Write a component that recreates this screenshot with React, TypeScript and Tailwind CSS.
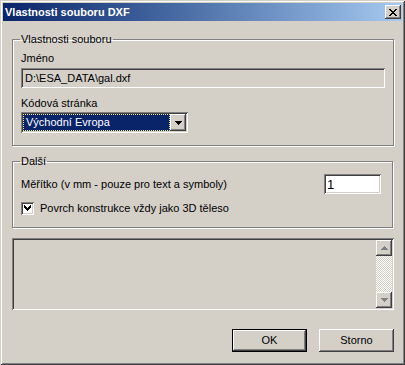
const raised =
  "shadow-[inset_-1px_-1px_#404040,inset_1px_1px_#ffffff,inset_-2px_-2px_#808080,inset_2px_2px_#d4d0c8]";
const sunken =
  "shadow-[inset_1px_1px_#808080,inset_-1px_-1px_#ffffff,inset_2px_2px_#404040,inset_-2px_-2px_#d4d0c8]";

function Arrow({ dir, color = "#000000" }: { dir: "up" | "down"; color?: string }) {
  return (
    <svg width="7" height="4" viewBox="0 0 7 4" shapeRendering="crispEdges">
      {dir === "down" ? (
        <path d="M0 0h7v1H0zM1 1h5v1H1zM2 2h3v1H2zM3 3h1v1H3z" fill={color} />
      ) : (
        <path d="M3 0h1v1H3zM2 1h3v1H2zM1 2h5v1H1zM0 3h7v1H0z" fill={color} />
      )}
    </svg>
  );
}

function Group({ title, children, className = "" }: { title: string; children: React.ReactNode; className?: string }) {
  return (
    <fieldset
      className={`ml-[9px] w-[381px] border border-[#808080] shadow-[inset_1px_1px_#ffffff,1px_1px_#ffffff] px-[8px] ${className}`}
    >
      <legend className="ml-[-1px] px-[1px] leading-[13px]">{title}</legend>
      {children}
    </fieldset>
  );
}

export default function App() {
  return (
    <div
      className="w-[405px] h-[365px] bg-[#d4d0c8] p-[3px] flex flex-col text-[11px] leading-[13px] text-black font-['Liberation_Sans',Arial,sans-serif] shadow-[inset_1px_1px_#d4d0c8,inset_-1px_-1px_#404040,inset_2px_2px_#ffffff,inset_-2px_-2px_#808080]"
    >
      {/* title bar */}
      <div className="h-[18px] flex items-center justify-between pl-[2px] pr-[1px] bg-linear-to-r from-[#0a246a] to-[#a6caf0]">
        <span className="font-bold text-white">Vlastnosti souboru DXF</span>
        <div className={`w-[16px] h-[14px] bg-[#d4d0c8] flex items-center justify-center ${raised}`}>
          <svg width="8" height="7" viewBox="0 0 8 7" shapeRendering="crispEdges">
            <path
              d="M0 0h2v1H0zM6 0h2v1H6zM1 1h2v1H1zM5 1h2v1H5zM2 2h4v1H2zM3 3h2v1H3zM2 4h4v1H2zM1 5h2v1H1zM5 5h2v1H5zM0 6h2v1H0zM6 6h2v1H6z"
              fill="#000"
            />
          </svg>
        </div>
      </div>

      <Group title="Vlastnosti souboru" className="mt-[12px] pb-[12px]">
        <div className="pt-[6px]">Jméno</div>
        <div className={`mt-[3px] h-[20px] w-[364px] flex items-center pl-[4px] ${sunken}`}>D:\ESA_DATA\gal.dxf</div>
        <div className="mt-[9px]">Kódová stránka</div>
        <div className={`mt-[2px] h-[21px] w-[167px] p-[2px] flex bg-white ${sunken}`}>
          <div className="flex-1 bg-[#0a246a] text-white flex items-center pl-[2px] border border-dotted border-[#f0e68c]">
            Východní Evropa
          </div>
          <div className={`w-[16px] h-[17px] bg-[#d4d0c8] flex items-center justify-center ${raised}`}>
            <Arrow dir="down" />
          </div>
        </div>
      </Group>

      <Group title="Další" className="mt-[9px] pb-[12px]">
        <div className="pt-[6px] flex items-center justify-between pr-[3px]">
          <span>Měřítko (v mm - pouze pro text a symboly)</span>
          <div className={`w-[57px] h-[20px] bg-white flex items-center pl-[3px] text-[13px] ${sunken}`}>1</div>
        </div>
        <label className="mt-[8px] flex items-center gap-[6px]">
          <span className={`w-[13px] h-[13px] bg-white flex items-center justify-center ${sunken}`}>
            <svg width="7" height="7" viewBox="0 0 7 7" shapeRendering="crispEdges">
              <path d="M6 0h1v3H6zM5 1h1v3H5zM4 2h1v3H4zM3 3h1v3H3zM2 2h1v3H2zM1 1h1v3H1zM0 0h1v3H0z" fill="#000" />
            </svg>
          </span>
          <span>Povrch konstrukce vždy jako 3D těleso</span>
        </label>
      </Group>

      <div className={`mt-[10px] ml-[9px] w-[382px] h-[72px] p-[2px] flex justify-end ${sunken}`}>
        <div className="w-[16px] flex flex-col">
          <div className={`h-[16px] bg-[#d4d0c8] flex items-center justify-center ${raised}`}>
            <Arrow dir="up" color="#808080" />
          </div>
          <div className="flex-1 bg-[repeating-conic-gradient(#ffffff_0_25%,#d4d0c8_0_50%)] bg-[length:2px_2px]" />
          <div className={`h-[16px] bg-[#d4d0c8] flex items-center justify-center ${raised}`}>
            <Arrow dir="down" color="#808080" />
          </div>
        </div>
      </div>

      <div className="mt-[19px] flex justify-end gap-[12px] pr-[8px]">
        <button className="w-[75px] h-[23px] border border-black bg-[#d4d0c8] shadow-[inset_-1px_-1px_#404040,inset_1px_1px_#ffffff,inset_-2px_-2px_#808080]">
          OK
        </button>
        <button className={`w-[75px] h-[23px] bg-[#d4d0c8] ${raised}`}>Storno</button>
      </div>
    </div>
  );
}
